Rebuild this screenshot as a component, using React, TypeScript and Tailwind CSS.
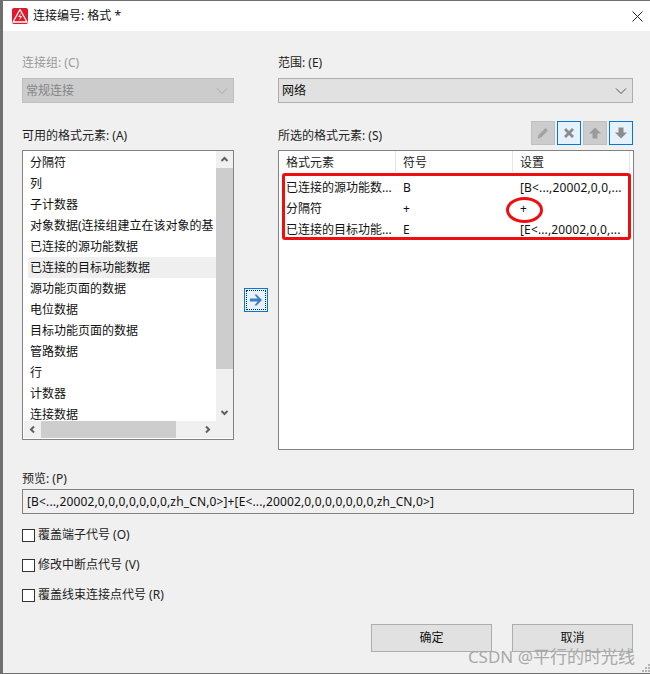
const FONT = "font-['Noto_Sans','Noto_Sans_CJK_SC',sans-serif]";

const items = ["分隔符","列","子计数器","对象数据(连接组建立在该对象的基","已连接的源功能数据","已连接的目标功能数据","源功能页面的数据","电位数据","目标功能页面的数据","管路数据","行","计数器","连接数据"];

function Chevron({ className = "" }: { className?: string }) {
  return (
    <svg width="12" height="8" viewBox="0 0 12 8" className={className} fill="none" stroke="currentColor" strokeWidth="1">
      <path d="M1 1.5 L6 6.5 L11 1.5" />
    </svg>
  );
}

function ScrollArrow({ dir }: { dir: "up" | "down" | "left" | "right" }) {
  const d = { up: "M1.5 6 L4.5 3 L7.5 6", down: "M1.5 3 L4.5 6 L7.5 3", left: "M6 1.5 L3 4.5 L6 7.5", right: "M3 1.5 L6 4.5 L3 7.5" }[dir];
  return (
    <svg width="9" height="9" viewBox="0 0 9 9" fill="none" stroke="#606060" strokeWidth="2"><path d={d} /></svg>
  );
}

function Check({ label, mb }: { label: string; mb: string }) {
  return (
    <div className={`flex items-center gap-[3px] h-[14px] ${mb}`}>
      <div className="w-[13px] h-[13px] bg-white border border-[#333333] shrink-0" />
      <span className="text-[12px] text-[#222222] whitespace-nowrap">{label}</span>
    </div>
  );
}

function ToolBtn({ on, children }: { on?: boolean; children: React.ReactNode }) {
  return (
    <div className={on ? "w-[24px] h-[24px] border border-[#0078d7] bg-[#e5f1fb] flex items-center justify-center" : "w-[24px] h-[24px] border border-[#bfbfbf] bg-[#cccccc] flex items-center justify-center"}>
      {children}
    </div>
  );
}

function Row({ a, b, c }: { a: string; b: string; c: string }) {
  return (
    <div className="flex h-[21px] items-center text-[12px] text-[#111111] whitespace-nowrap">
      <div className="w-[117px] pl-[7px] overflow-hidden">{a}</div>
      <div className="w-[117px] pl-[7px]">{b}</div>
      <div className="pl-[7px] tracking-[0.14px]">{c}</div>
    </div>
  );
}

export default function App() {
  return (
    <div className={`relative w-[650px] h-[674px] overflow-hidden bg-[#f0f0f0] border-t border-b border-l-[3px] border-t-[#6f6f6f] border-b-[#6f6f6f] border-l-[#6f6f6f] ${FONT}`}>
      <div className="h-[30px] bg-white flex items-center pl-[9px] pr-[7px]">
        <svg width="16" height="16" viewBox="0 0 16 16" className="shrink-0">
          <rect width="16" height="16" rx="2" fill="#e0192d" />
          <path d="M8 1.5 L15 14 L1 14 Z" fill="none" stroke="#fff" strokeWidth="1.3" strokeLinejoin="round" />
          <path d="M9 5 L6.2 9 L8.4 9 L7 12.6 L10.2 8.2 L8 8.2 Z" fill="#fff" />
        </svg>
        <span className="ml-[5px] text-[12px] text-[#111111]">连接编号: 格式 *</span>
        <svg width="11" height="11" viewBox="0 0 11 11" className="ml-auto" stroke="#222222" strokeWidth="1" fill="none">
          <path d="M0.5 0.5 L10.5 10.5 M10.5 0.5 L0.5 10.5" />
        </svg>
      </div>

      <div className="pl-[19px] pt-[23px] w-[631px]">
        <div className="grid grid-cols-[212px_44px_356px]">
          <div className="flex flex-col">
            <div className="h-[17px] text-[12px] leading-[17px] text-[#9a9a9a]">连接组: (C)</div>
            <div className="mt-[7px] h-[25px] bg-[#cccccc] border border-[#bfbfbf] flex items-center justify-between pl-[3px] pr-[5px] text-[12px] text-[#858585]">
              <span>常规连接</span>
              <Chevron className="text-[#a8a8a8]" />
            </div>
          </div>
          <div />
          <div className="flex flex-col">
            <div className="h-[17px] text-[12px] leading-[17px] text-[#222222]">范围: (E)</div>
            <div className="mt-[7px] h-[25px] w-[355px] bg-[#e1e1e1] border border-[#adadad] flex items-center justify-between pl-[3px] pr-[5px] text-[12px] text-[#111111]">
              <span>网络</span>
              <Chevron className="text-[#555555]" />
            </div>
          </div>

          <div className="flex flex-col mt-[18px]">
            <div className="h-[29px] pt-[6px] text-[12px] leading-[17px] text-[#222222]">可用的格式元素: (A)</div>
            <div className="h-[290px] border border-[#828282] bg-white flex flex-col overflow-hidden">
              <div className="flex h-[270px]">
                <div className="w-[193px] pt-[1px] pl-[5px] overflow-hidden">
                  {items.map((t) => (
                    <div key={t} className={`h-[21px] leading-[21px] pl-[2px] text-[12px] text-[#111111] whitespace-nowrap overflow-hidden ${t === "已连接的目标功能数据" ? "bg-[#efefef]" : ""}`}>{t}</div>
                  ))}
                </div>
                <div className="w-[17px] bg-[#f0f0f0] flex flex-col">
                  <div className="h-[17px] flex items-center justify-center"><ScrollArrow dir="up" /></div>
                  <div className="h-[201px] bg-[#cdcdcd]" />
                  <div className="flex-1" />
                  <div className="h-[17px] flex items-center justify-center"><ScrollArrow dir="down" /></div>
                </div>
              </div>
              <div className="ml-[1px] h-[17px] bg-[#f0f0f0] flex items-center">
                <div className="w-[17px] flex justify-center"><ScrollArrow dir="left" /></div>
                <div className="w-[135px] h-full bg-[#cdcdcd]" />
                <div className="ml-[23px] w-[17px] flex justify-center"><ScrollArrow dir="right" /></div>
              </div>
            </div>
          </div>

          <div className="mt-[18px] pl-[10px]">
            <div className="mt-[167px] w-[24px] h-[24px] border border-[#0078d7] bg-[#e5f1fb] p-[1px]">
              <div className="w-full h-full border border-dotted border-[#222222] flex items-center justify-center">
                <svg width="14" height="12" viewBox="0 0 14 12"><path d="M7.5 0.5 L13 6 L7.5 11.5 L5.5 11.5 L8.6 7.5 L1 7.5 L1 4.5 L8.6 4.5 L5.5 0.5 Z" fill="#3f7fbf" /></svg>
              </div>
            </div>
          </div>

          <div className="flex flex-col mt-[18px]">
            <div className="h-[29px] flex items-start justify-between w-[355px]">
              <div className="pt-[6px] text-[12px] leading-[17px] text-[#222222]">所选的格式元素: (S)</div>
              <div className="flex gap-[2px]">
                <ToolBtn>
                  <svg width="14" height="14" viewBox="0 0 14 14"><path d="M9.5 2 L12 4.5 L5 11.5 L1.5 12.5 L2.5 9 Z" fill="#a3a3a3" /></svg>
                </ToolBtn>
                <ToolBtn on>
                  <svg width="14" height="14" viewBox="0 0 14 14"><path d="M2 4 L4 2 L7 5 L10 2 L12 4 L9 7 L12 10 L10 12 L7 9 L4 12 L2 10 L5 7 Z" fill="#8c8c8c" /></svg>
                </ToolBtn>
                <ToolBtn>
                  <svg width="14" height="14" viewBox="0 0 14 14"><path d="M7 1.5 L13 7.5 L9.5 7.5 L9.5 12.5 L4.5 12.5 L4.5 7.5 L1 7.5 Z" fill="#9a9a9a" /></svg>
                </ToolBtn>
                <ToolBtn on>
                  <svg width="14" height="14" viewBox="0 0 14 14"><path d="M7 12.5 L13 6.5 L9.5 6.5 L9.5 1.5 L4.5 1.5 L4.5 6.5 L1 6.5 Z" fill="#8c8c8c" /></svg>
                </ToolBtn>
              </div>
            </div>
            <div className="relative w-[356px] h-[300px] border border-[#828282] bg-white">
              <div className="flex h-[21px] items-center text-[12px] text-[#222222] bg-white">
                <div className="w-[117px] pl-[7px] pt-[2px] h-full flex items-center border-r border-[#e5e5e5]">格式元素</div>
                <div className="w-[117px] pl-[7px] pt-[2px] h-full flex items-center border-r border-[#e5e5e5]">符号</div>
                <div className="w-[117px] pl-[7px] pt-[2px] h-full flex items-center border-r border-[#e5e5e5]">设置</div>
              </div>
              <div className="pt-[5px]">
                <Row a="已连接的源功能数..." b="B" c="[B<...,20002,0,0,..." />
                <Row a="分隔符" b="+" c="+" />
                <Row a="已连接的目标功能..." b="E" c="[E<...,20002,0,0,..." />
              </div>
              <div className="absolute left-[3px] top-[22px] w-[349px] h-[67px] border-[3px] border-[#f00d0d] rounded-[3px]" />
              <div className="absolute left-[227px] top-[46px] w-[37px] h-[26px] border-[3px] border-[#f00d0d] rounded-[50%]" />
            </div>
          </div>
        </div>

        <div className="mt-[20px] h-[19px] text-[12px] leading-[17px] text-[#222222]">预览: (P)</div>
        <div className="w-[612px] h-[25px] border border-[#828282] flex items-center pl-[4px] text-[12px] tracking-[0.14px] text-[#111111] whitespace-nowrap">
          [B&lt;...,20002,0,0,0,0,0,0,0,zh_CN,0&gt;]+[E&lt;...,20002,0,0,0,0,0,0,0,zh_CN,0&gt;]
        </div>

        <div className="mt-[14px]">
          <Check label="覆盖端子代号 (O)" mb="mb-[16px]" />
          <Check label="修改中断点代号 (V)" mb="mb-[16px]" />
          <Check label="覆盖线束连接点代号 (R)" mb="" />
        </div>

        <div className="mt-[22px] flex justify-end gap-[20px] w-[611px]">
          <div className="w-[121px] h-[28px] bg-[#e1e1e1] border border-[#adadad] flex items-center justify-center text-[12px] text-[#111111]">确定</div>
          <div className="w-[121px] h-[28px] bg-[#e1e1e1] border border-[#adadad] flex items-center justify-center text-[12px] text-[#111111]">取消</div>
        </div>
      </div>

      <div className="absolute right-[15px] top-[644px] text-[17px] leading-[24px] text-[#a8a8a8] whitespace-nowrap">CSDN @平行的时光线</div>
      <svg width="9" height="9" viewBox="0 0 9 9" className="absolute right-[0px] bottom-[1px]" fill="#b5b5b5">
        <rect x="7" y="1" width="2" height="2" /><rect x="4" y="4" width="2" height="2" /><rect x="7" y="4" width="2" height="2" /><rect x="1" y="7" width="2" height="2" /><rect x="4" y="7" width="2" height="2" /><rect x="7" y="7" width="2" height="2" />
      </svg>
    </div>
  );
}
